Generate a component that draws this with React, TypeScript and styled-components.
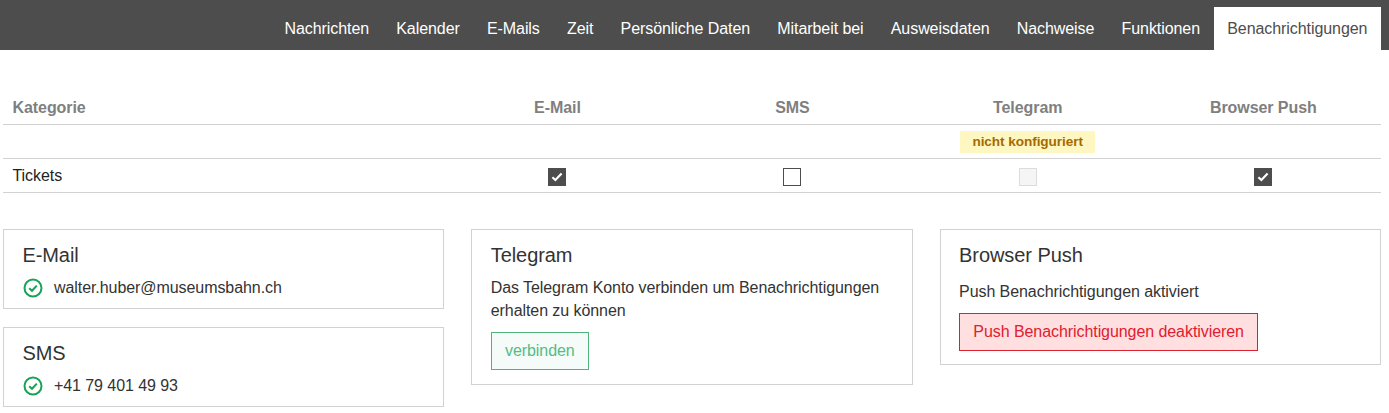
import React from "react";
import styled, { createGlobalStyle } from "styled-components";

const Global = createGlobalStyle`
  html, body { margin: 0; padding: 0; background: #fff; }
  body { font-family: "Liberation Sans", Arial, sans-serif; font-size: 16px; color: #333; letter-spacing: -0.07px; }
  * { box-sizing: border-box; }
`;

const Nav = styled.nav`
  height: 50px;
  background: #4d4d4d;
  display: flex;
  justify-content: flex-end;
  align-items: flex-end;
  padding-right: 8px;
`;
const Tab = styled.a<{ $active?: boolean }>`
  height: 43px;
  display: flex;
  align-items: center;
  padding: 0 13.6px;
  font-size: 16px;
  color: ${(p) => (p.$active ? "#4d4d4d" : "#fff")};
  background: ${(p) => (p.$active ? "#fff" : "transparent")};
`;
const Main = styled.main`
  padding: 41px 8px 0 3px;
`;
const Row = styled.div`
  display: grid;
  grid-template-columns: 1fr 235.33px 234.6px 236px 235.33px;
  height: 34px;
  border-bottom: 1px solid #d2d2d2;
  align-items: center;
`;
const HeadCell = styled.div<{ $left?: boolean }>`
  font-weight: 700;
  color: #7f7f7f;
  text-align: ${(p) => (p.$left ? "left" : "center")};
  padding-left: ${(p) => (p.$left ? "9.5px" : "0")};
`;
const Cell = styled.div`
  display: flex;
  justify-content: center;
  align-items: center;
`;
const Label = styled.div`
  padding-left: 9.5px;
  color: #222;
`;
const Badge = styled.span`
  display: inline-block;
  height: 22px;
  line-height: 21px;
  padding: 0 12px;
  background: #fff7c2;
  color: #a66a00;
  font-size: 13.6px;
  font-weight: 700;
  position: relative;
  top: 0.5px;
`;
const Box = styled.span<{ $state: "on" | "off" | "disabled" }>`
  width: 18px;
  height: 18px;
  display: flex;
  align-items: center;
  justify-content: center;
  position: relative;
  top: 1px;
  border: 1px solid ${(p) => (p.$state === "disabled" ? "#dcdcdc" : "#4d4d4d")};
  background: ${(p) => (p.$state === "on" ? "#4d4d4d" : p.$state === "disabled" ? "#f5f5f5" : "#fff")};
`;
const Cards = styled.div`
  display: grid;
  grid-template-columns: repeat(3, 1fr);
  column-gap: 27px;
  align-items: start;
  margin-top: 36px;
`;
const Column = styled.div`
  display: flex;
  flex-direction: column;
  gap: 18px;
`;
const Card = styled.section<{ $bottom: number }>`
  border: 1px solid #d2d2d2;
  padding: 11px 18.4px ${(p) => p.$bottom}px;
`;
const Title = styled.h3`
  margin: 0 0 5px;
  font-size: 20px;
  font-weight: 400;
  line-height: 28px;
  color: #333;
`;
const Verified = styled.div`
  display: flex;
  align-items: center;
  gap: 10.6px;
  height: 27px;
  padding-left: 1px;
  color: #333;
`;
const Text = styled.p<{ $gap: number; $top: number }>`
  margin: ${(p) => p.$top}px 0 ${(p) => p.$gap}px;
  line-height: 23px;
  color: #333;
`;
const Button = styled.button<{ $tone: "green" | "red" }>`
  display: block;
  height: 38px;
  padding: 0 13.3px;
  font: inherit;
  letter-spacing: inherit;
  border: 1px solid ${(p) => (p.$tone === "green" ? "#4fb37a" : "#d8222e")};
  background: ${(p) => (p.$tone === "green" ? "#f5fbf8" : "#ffdfe0")};
  color: ${(p) => (p.$tone === "green" ? "#56bb85" : "#e0202f")};
`;

const Tick = () => (
  <svg width="12" height="10" viewBox="0 0 12 10" aria-hidden="true">
    <path d="M1.4 5.2 4.4 8 10.6 1.6" fill="none" stroke="#fff" strokeWidth="2.2" />
  </svg>
);
const CheckCircle = () => (
  <svg width="20" height="20" viewBox="0 0 20 20" fill="none" aria-hidden="true">
    <circle cx="10" cy="10" r="8.5" stroke="#17a356" strokeWidth="2" />
    <path d="M6.2 10.2 9 12.8 13.8 7.6" stroke="#17a356" strokeWidth="2" />
  </svg>
);

const tabs = ["Nachrichten", "Kalender", "E-Mails", "Zeit", "Persönliche Daten", "Mitarbeit bei", "Ausweisdaten", "Nachweise", "Funktionen"];

export default function App() {
  return (
    <>
      <Global />
      <Nav>
        {tabs.map((t) => (
          <Tab key={t}>{t}</Tab>
        ))}
        <Tab $active>Benachrichtigungen</Tab>
      </Nav>
      <Main>
        <Row>
          <HeadCell $left>Kategorie</HeadCell>
          <HeadCell>E-Mail</HeadCell>
          <HeadCell>SMS</HeadCell>
          <HeadCell>Telegram</HeadCell>
          <HeadCell>Browser Push</HeadCell>
        </Row>
        <Row>
          <div />
          <div />
          <div />
          <Cell>
            <Badge>nicht konfiguriert</Badge>
          </Cell>
          <div />
        </Row>
        <Row>
          <Label>Tickets</Label>
          <Cell>
            <Box $state="on"><Tick /></Box>
          </Cell>
          <Cell>
            <Box $state="off" />
          </Cell>
          <Cell>
            <Box $state="disabled" />
          </Cell>
          <Cell>
            <Box $state="on"><Tick /></Box>
          </Cell>
        </Row>
        <Cards>
          <Column>
            <Card $bottom={7}>
              <Title>E-Mail</Title>
              <Verified>
                <CheckCircle />
                walter.huber@museumsbahn.ch
              </Verified>
            </Card>
            <Card $bottom={7}>
              <Title>SMS</Title>
              <Verified>
                <CheckCircle />
                +41 79 401 49 93
              </Verified>
            </Card>
          </Column>
          <Card $bottom={14}>
            <Title>Telegram</Title>
            <Text $gap={10} $top={7}>
              Das Telegram Konto verbinden um Benachrichtigungen erhalten zu können
            </Text>
            <Button $tone="green">verbinden</Button>
          </Card>
          <Card $bottom={13}>
            <Title>Browser Push</Title>
            <Text $gap={10} $top={11}>
              Push Benachrichtigungen aktiviert
            </Text>
            <Button $tone="red">Push Benachrichtigungen deaktivieren</Button>
          </Card>
        </Cards>
      </Main>
    </>
  );
}
